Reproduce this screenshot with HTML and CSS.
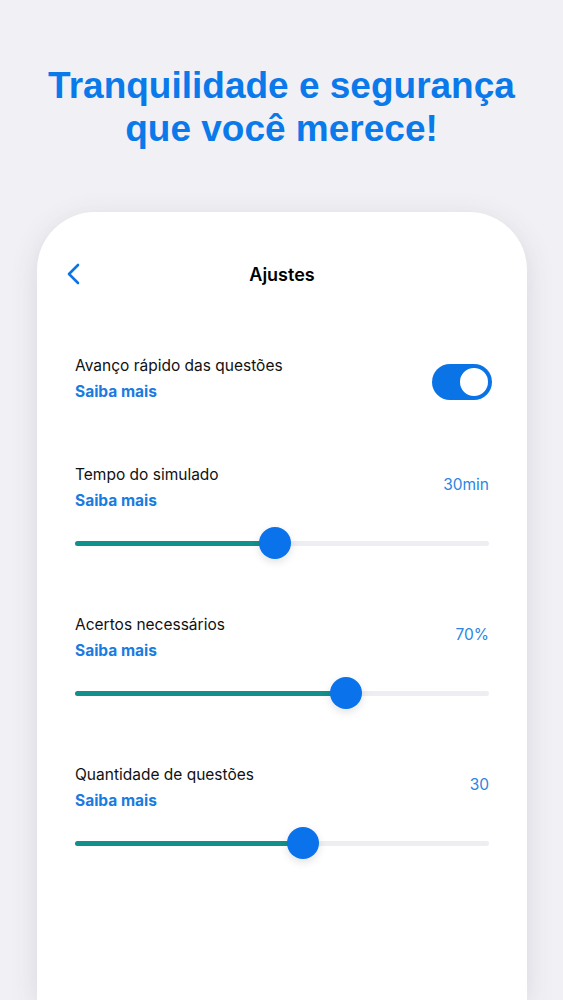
FILE: index.html
```html
<!DOCTYPE html>
<html lang="pt-BR">
<head>
<meta charset="utf-8">
<title>Ajustes</title>
<link rel="stylesheet" href="styles.css">
</head>
<body>
<header class="hero">
  <h1 class="hero-title">Tranquilidade e segurança<br>que você merece!</h1>
</header>
<main class="phone">
  <nav class="nav">
    <svg class="back" viewBox="0 0 14 22" width="14" height="22" aria-hidden="true">
      <path d="M12 2 L3 11 L12 20" fill="none" stroke="#0A74E6" stroke-width="2.6" stroke-linecap="round" stroke-linejoin="round"/>
    </svg>
    <span class="nav-title">Ajustes</span>
  </nav>

  <section class="setting setting-toggle">
    <div class="texts">
      <div class="label">Avanço rápido das questões</div>
      <div class="link">Saiba mais</div>
    </div>
    <div class="toggle"><div class="knob"></div></div>
  </section>

  <section class="setting setting-slider">
    <div class="head">
      <div class="texts">
        <div class="label">Tempo do simulado</div>
        <div class="link">Saiba mais</div>
      </div>
      <div class="value">30min</div>
    </div>
    <div class="slider">
      <div class="track"></div>
      <div class="fill" style="width:48.3%"></div>
      <div class="thumb" style="left:48.3%"></div>
    </div>
  </section>

  <section class="setting setting-slider">
    <div class="head">
      <div class="texts">
        <div class="label">Acertos necessários</div>
        <div class="link">Saiba mais</div>
      </div>
      <div class="value">70%</div>
    </div>
    <div class="slider">
      <div class="track"></div>
      <div class="fill" style="width:65.5%"></div>
      <div class="thumb" style="left:65.5%"></div>
    </div>
  </section>

  <section class="setting setting-slider">
    <div class="head">
      <div class="texts">
        <div class="label">Quantidade de questões</div>
        <div class="link">Saiba mais</div>
      </div>
      <div class="value">30</div>
    </div>
    <div class="slider">
      <div class="track"></div>
      <div class="fill" style="width:55.1%"></div>
      <div class="thumb" style="left:55.1%"></div>
    </div>
  </section>
</main>
</body>
</html>
```

FILE: styles.css
```css
* { box-sizing: border-box; }

html, body {
  margin: 0;
  padding: 0;
  height: 1000px;
  overflow: hidden;
}

body {
  background: #F1F1F5;
  font-family: Inter, "Liberation Sans", sans-serif;
  color: #111;
}

.hero {
  padding-top: 64px;
  text-align: center;
}

.hero-title {
  margin: 0;
  font-family: "Liberation Sans", Arial, sans-serif;
  font-weight: 700;
  font-size: 37px;
  line-height: 43px;
  color: #0A7AEB;
}

.phone {
  margin: 62px 0 0 37px;
  width: 490px;
  height: 788px;
  background: #fff;
  border-radius: 58px 58px 0 0;
  box-shadow: 0 6px 28px rgba(40, 40, 70, 0.13);
  padding: 40px 38px 0 38px;
}

.nav {
  position: relative;
  height: 44px;
  display: flex;
  align-items: center;
  justify-content: center;
}

.back {
  position: absolute;
  left: -9px;
  top: 11px;
}

.nav-title {
  font-size: 18px;
  font-weight: 600;
  color: #000;
}

.setting-toggle {
  margin-top: 57px;
  display: flex;
  align-items: flex-start;
  justify-content: space-between;
}

.label {
  font-size: 15.5px;
  line-height: 26px;
  color: #111;
}

.link {
  font-size: 15.5px;
  line-height: 26px;
  font-weight: 700;
  color: #1A7BE0;
}

.toggle {
  margin-top: 11px;
  margin-right: -3px;
  width: 60px;
  height: 36px;
  border-radius: 18px;
  background: #0A74E6;
  padding: 2px;
  display: flex;
  justify-content: flex-end;
}

.knob {
  width: 32px;
  height: 32px;
  border-radius: 50%;
  background: #fff;
  border: 2px solid #0A74E6;
}

.setting-slider {
  margin-top: 57px;
}

.setting-slider + .setting-slider {
  margin-top: 53px;
}

.head {
  display: flex;
  justify-content: space-between;
  align-items: center;
}

.value {
  font-size: 15.5px;
  color: #2A86E2;
  padding-bottom: 7px;
}

.slider {
  position: relative;
  margin-top: 13px;
  height: 32px;
}

.track {
  position: absolute;
  left: 0;
  right: 0;
  top: 14px;
  height: 5px;
  border-radius: 3px;
  background: #EEEEF2;
}

.fill {
  position: absolute;
  left: 0;
  top: 14px;
  height: 5px;
  border-radius: 3px;
  background: #12908B;
}

.thumb {
  position: absolute;
  top: 0;
  width: 32px;
  height: 32px;
  margin-left: -16px;
  border-radius: 50%;
  background: #0A72EA;
  box-shadow: 0 3px 8px rgba(0, 0, 0, 0.12);
}
```
